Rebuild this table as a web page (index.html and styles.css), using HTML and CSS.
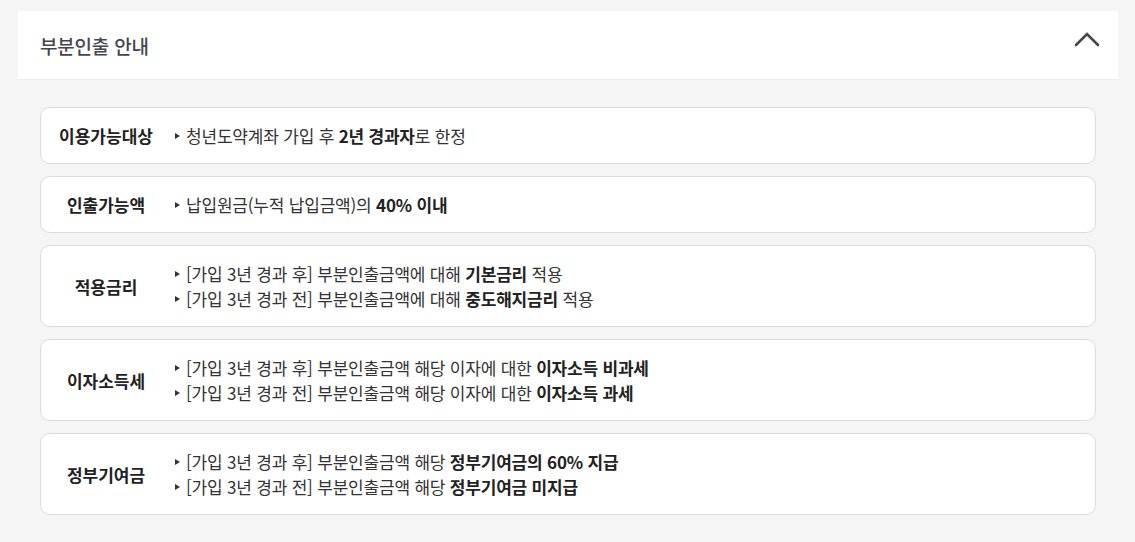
FILE: index.html
```html
<!DOCTYPE html>
<html lang="ko">
<head>
<meta charset="utf-8">
<link rel="stylesheet" href="styles.css">
</head>
<body>
<section class="panel">
  <header class="panel-head">
    <h2 class="panel-title">부분인출 안내</h2>
    <svg class="chev" width="26" height="16" viewBox="0 0 26 16" aria-hidden="true">
      <path d="M2 14 L13 3 L24 14" fill="none" stroke="#454550" stroke-width="2.6" stroke-linecap="round" stroke-linejoin="miter"/>
    </svg>
  </header>
  <div class="list">
    <div class="item">
      <div class="label">이용가능대상</div>
      <ul class="desc">
        <li>청년도약계좌 가입 후 <b>2년 경과자</b>로 한정</li>
      </ul>
    </div>
    <div class="item">
      <div class="label">인출가능액</div>
      <ul class="desc">
        <li>납입원금(누적 납입금액)의 <b>40% 이내</b></li>
      </ul>
    </div>
    <div class="item">
      <div class="label">적용금리</div>
      <ul class="desc">
        <li>[가입 3년 경과 후] 부분인출금액에 대해 <b>기본금리</b> 적용</li>
        <li>[가입 3년 경과 전] 부분인출금액에 대해 <b>중도해지금리</b> 적용</li>
      </ul>
    </div>
    <div class="item">
      <div class="label">이자소득세</div>
      <ul class="desc">
        <li>[가입 3년 경과 후] 부분인출금액 해당 이자에 대한 <b>이자소득 비과세</b></li>
        <li>[가입 3년 경과 전] 부분인출금액 해당 이자에 대한 <b>이자소득 과세</b></li>
      </ul>
    </div>
    <div class="item">
      <div class="label">정부기여금</div>
      <ul class="desc">
        <li>[가입 3년 경과 후] 부분인출금액 해당 <b>정부기여금의 60% 지급</b></li>
        <li>[가입 3년 경과 전] 부분인출금액 해당 <b>정부기여금 미지급</b></li>
      </ul>
    </div>
  </div>
</section>
</body>
</html>
```

FILE: styles.css
```css
* { box-sizing: border-box; }
html, body {
  margin: 0;
  padding: 0;
  background: #f5f5f6;
}
body {
  font-family: "Noto Sans CJK KR", "Noto Sans", sans-serif;
  color: #333;
  padding: 11px 17px 0 18px;
}
.panel-head {
  height: 69px;
  background: #fff;
  border-bottom: 1px solid #ececee;
  display: flex;
  align-items: center;
  justify-content: space-between;
  padding: 0 18px 0 22px;
}
.panel-title {
  margin: 0;
  font-size: 19px;
  font-weight: 500;
  color: #45454d;
  letter-spacing: -0.2px;
}
.chev { display: block; margin-top: -12px; }
.list {
  padding: 27px 22px 0;
  display: flex;
  flex-direction: column;
  gap: 12px;
}
.item {
  background: #fff;
  border: 1px solid #dcdcde;
  border-radius: 10px;
  display: flex;
  align-items: center;
  padding: 15px 0 15px;
}
.label {
  width: 130px;
  margin-right: 2px;
  flex: none;
  text-align: center;
  font-size: 17px;
  font-weight: 700;
  color: #222;
  letter-spacing: 0;
}
.desc {
  list-style: none;
  margin: 0;
  padding: 0;
  font-size: 17px;
  line-height: 25px;
  color: #333;
  letter-spacing: -0.2px;
}
.desc li {
  position: relative;
  padding-left: 13px;
}
.desc li::before {
  content: "";
  position: absolute;
  left: 2px;
  top: 10px;
  border-left: 5px solid #333;
  border-top: 3px solid transparent;
  border-bottom: 3px solid transparent;
}
.desc b { font-weight: 700; color: #222; }
```
